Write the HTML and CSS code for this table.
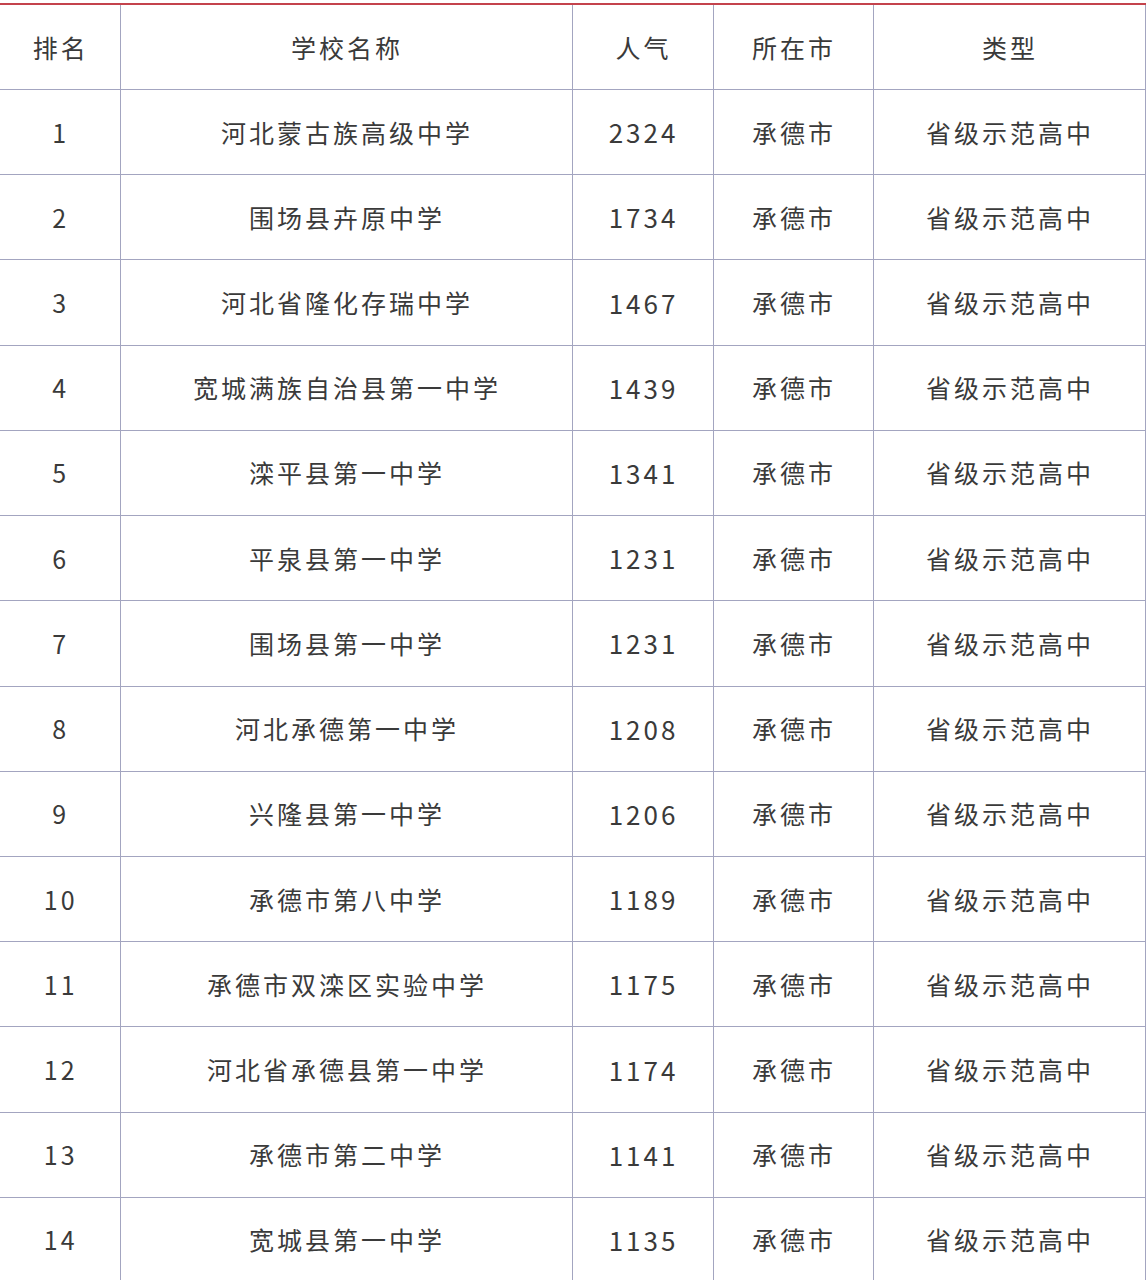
FILE: index.html
```html
<!DOCTYPE html>
<html lang="zh-CN">
<head>
<meta charset="utf-8">
<link rel="stylesheet" href="styles.css">
</head>
<body>
<table class="rank">
  <colgroup>
    <col class="c1"><col class="c2"><col class="c3"><col class="c4"><col class="c5">
  </colgroup>
  <thead>
    <tr><th>排名</th><th>学校名称</th><th>人气</th><th>所在市</th><th>类型</th></tr>
  </thead>
  <tbody>
    <tr><td>1</td><td>河北蒙古族高级中学</td><td class="num">2324</td><td>承德市</td><td>省级示范高中</td></tr>
    <tr><td>2</td><td>围场县卉原中学</td><td class="num">1734</td><td>承德市</td><td>省级示范高中</td></tr>
    <tr><td>3</td><td>河北省隆化存瑞中学</td><td class="num">1467</td><td>承德市</td><td>省级示范高中</td></tr>
    <tr><td>4</td><td>宽城满族自治县第一中学</td><td class="num">1439</td><td>承德市</td><td>省级示范高中</td></tr>
    <tr><td>5</td><td>滦平县第一中学</td><td class="num">1341</td><td>承德市</td><td>省级示范高中</td></tr>
    <tr><td>6</td><td>平泉县第一中学</td><td class="num">1231</td><td>承德市</td><td>省级示范高中</td></tr>
    <tr><td>7</td><td>围场县第一中学</td><td class="num">1231</td><td>承德市</td><td>省级示范高中</td></tr>
    <tr><td>8</td><td>河北承德第一中学</td><td class="num">1208</td><td>承德市</td><td>省级示范高中</td></tr>
    <tr><td>9</td><td>兴隆县第一中学</td><td class="num">1206</td><td>承德市</td><td>省级示范高中</td></tr>
    <tr><td>10</td><td>承德市第八中学</td><td class="num">1189</td><td>承德市</td><td>省级示范高中</td></tr>
    <tr><td>11</td><td>承德市双滦区实验中学</td><td class="num">1175</td><td>承德市</td><td>省级示范高中</td></tr>
    <tr><td>12</td><td>河北省承德县第一中学</td><td class="num">1174</td><td>承德市</td><td>省级示范高中</td></tr>
    <tr><td>13</td><td>承德市第二中学</td><td class="num">1141</td><td>承德市</td><td>省级示范高中</td></tr>
    <tr><td>14</td><td>宽城县第一中学</td><td class="num">1135</td><td>承德市</td><td>省级示范高中</td></tr>
  </tbody>
</table>
</body>
</html>
```
FILE: styles.css
```css
html, body {
  margin: 0;
  padding: 0;
  background: #ffffff;
}
body {
  padding-top: 3px;
  font-family: "Noto Sans CJK SC", "Noto Sans", sans-serif;
  color: #3a3a3a;
}
.rank {
  border-collapse: collapse;
  table-layout: fixed;
  width: 1145px;
  border-top: 2px solid #c4434c;
}
.c1 { width: 120px; }
.c2 { width: 452px; }
.c3 { width: 141px; }
.c4 { width: 160px; }
.c5 { width: 272px; }
.rank th, .rank td {
  font-weight: 400;
  font-size: 25px;
  letter-spacing: 3px;
  text-align: center;
  vertical-align: middle;
  padding: 0 0 0 2px;
  height: 84.23px;
  border: 1px solid #a3a5c0;
  line-height: 1;
}
.rank td.num {
  font-size: 26px;
}
.rank th {
  border-top: none;
  height: 84px;
}
.rank tr > :first-child {
  border-left: none;
}
```
